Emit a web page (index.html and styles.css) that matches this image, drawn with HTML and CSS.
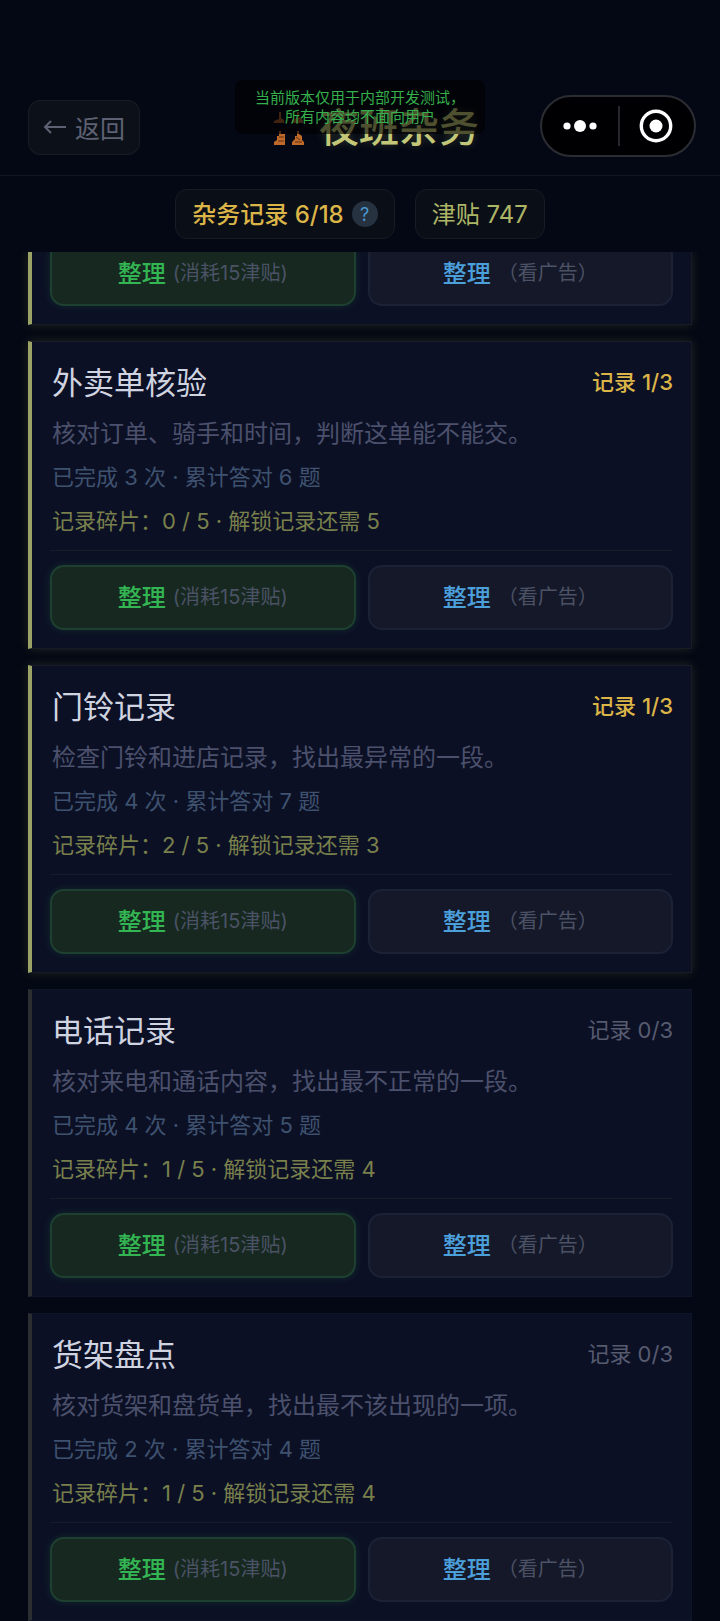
FILE: index.html
```html
<!DOCTYPE html>
<html lang="zh-CN">
<head>
  <meta charset="utf-8">
  <meta name="viewport" content="width=device-width, initial-scale=1">
  <title>夜班杂务</title>
  <link rel="stylesheet" href="styles.css">
</head>
<body>
  <header class="topbar">
    <button class="back" type="button">
      <svg width="24" height="16" viewBox="0 0 24 16" aria-hidden="true"><path d="M8 2 2 8l6 6M2 8h21" fill="none" stroke="currentColor" stroke-width="2"/></svg>
      返回
    </button>
    <h1 class="title">
      <svg class="title-icon" width="32" height="36" viewBox="0 0 32 36" aria-hidden="true">
        <path d="M6 2h2v6l3 2v3H1v-2l5-2zM24 2h2v5l4 3v3H19v-3l5-2z" fill="#a4582c"/>
        <path d="M6 21h2v3h4v11H1v-3l3-2v-4h2zM24 21h2v3l3 2v4l2 2v3H19v-3l3-3v-3h2z" fill="#c06a2a"/>
        <path d="M6 27h5M5 31h6M23 27l4 3M22 32h7" stroke="#5c2f14" stroke-width="1" fill="none"/>
      </svg>
      夜班杂务
    </h1>
    <div class="capsule">
      <button class="capsule-btn" type="button" aria-label="更多">
        <svg width="34" height="14" viewBox="0 0 34 14"><g fill="#fff"><circle cx="4" cy="7" r="3.6"/><circle cx="17" cy="7" r="6"/><circle cx="30" cy="7" r="3.6"/></g></svg>
      </button>
      <button class="capsule-btn" type="button" aria-label="关闭">
        <svg width="34" height="34" viewBox="0 0 34 34"><circle cx="17" cy="17" r="14.7" fill="none" stroke="#fff" stroke-width="3.4"/><circle cx="17" cy="17" r="6.5" fill="#fff"/></svg>
      </button>
    </div>
    <p class="notice">当前版本仅用于内部开发测试，<br>所有内容均不面向用户</p>
  </header>

  <div class="summary">
    <div class="chip chip-gold"><span>杂务记录 6/18</span> <button class="help" type="button">?</button></div>
    <div class="chip chip-lime"><span>津贴 747</span></div>
  </div>

  <main class="list">
    <section class="card card-lit card-cut">
      <div class="actions">
        <button class="act act-pay" type="button">整理 <small>(消耗15津贴)</small></button>
        <button class="act act-ad" type="button">整理 <small>（看广告）</small></button>
      </div>
    </section>

    <section class="card card-lit">
      <div class="card-head">
        <h2>外卖单核验</h2>
        <span class="count">记录 1/3</span>
      </div>
      <p class="desc">核对订单、骑手和时间，判断这单能不能交。</p>
      <p class="stat">已完成 3 次 · 累计答对 6 题</p>
      <p class="shard">记录碎片：0 / 5 · 解锁记录还需 5</p>
      <div class="actions">
        <button class="act act-pay" type="button">整理 <small>(消耗15津贴)</small></button>
        <button class="act act-ad" type="button">整理 <small>（看广告）</small></button>
      </div>
    </section>

    <section class="card card-lit">
      <div class="card-head">
        <h2>门铃记录</h2>
        <span class="count">记录 1/3</span>
      </div>
      <p class="desc">检查门铃和进店记录，找出最异常的一段。</p>
      <p class="stat">已完成 4 次 · 累计答对 7 题</p>
      <p class="shard">记录碎片：2 / 5 · 解锁记录还需 3</p>
      <div class="actions">
        <button class="act act-pay" type="button">整理 <small>(消耗15津贴)</small></button>
        <button class="act act-ad" type="button">整理 <small>（看广告）</small></button>
      </div>
    </section>

    <section class="card">
      <div class="card-head">
        <h2>电话记录</h2>
        <span class="count">记录 0/3</span>
      </div>
      <p class="desc">核对来电和通话内容，找出最不正常的一段。</p>
      <p class="stat">已完成 4 次 · 累计答对 5 题</p>
      <p class="shard">记录碎片：1 / 5 · 解锁记录还需 4</p>
      <div class="actions">
        <button class="act act-pay" type="button">整理 <small>(消耗15津贴)</small></button>
        <button class="act act-ad" type="button">整理 <small>（看广告）</small></button>
      </div>
    </section>

    <section class="card">
      <div class="card-head">
        <h2>货架盘点</h2>
        <span class="count">记录 0/3</span>
      </div>
      <p class="desc">核对货架和盘货单，找出最不该出现的一项。</p>
      <p class="stat">已完成 2 次 · 累计答对 4 题</p>
      <p class="shard">记录碎片：1 / 5 · 解锁记录还需 4</p>
      <div class="actions">
        <button class="act act-pay" type="button">整理 <small>(消耗15津贴)</small></button>
        <button class="act act-ad" type="button">整理 <small>（看广告）</small></button>
      </div>
    </section>
  </main>
</body>
</html>
```

FILE: styles.css
```css
* { box-sizing: border-box; }

body {
  margin: 0;
  background: #030814;
  color: #d5d8e4;
  font-family: Inter, "Noto Sans CJK SC", sans-serif;
  font-size: 22px;
}

h1, h2, p { margin: 0; }
button { font-family: inherit; margin: 0; padding: 0; cursor: pointer; }
svg { display: block; }

/* top bar */
.topbar {
  position: relative;
  display: grid;
  grid-template-columns: 1fr auto 1fr;
  align-items: center;
  padding: 80px 24px 0 28px;
  height: 176px;
  border-bottom: 1px solid #11161f;
}

.back {
  justify-self: start;
  display: flex;
  align-items: center;
  gap: 8px;
  height: 55px;
  padding: 0 14px 2px;
  border: 1px solid #191d24;
  border-radius: 12px;
  background: #0c1119;
  color: #5d6173;
  font-size: 25px;
}

.title {
  display: flex;
  align-items: center;
  gap: 14px;
  padding-left: 28px;
  color: #c3c878;
  font-size: 40px;
  font-weight: 500;
  line-height: 48px;
  text-shadow: 0 0 8px rgba(195, 200, 120, .25);
}

.capsule {
  justify-self: end;
  display: flex;
  width: 156px;
  height: 62px;
  margin-bottom: 4px;
  border: 2px solid #2b2d33;
  border-radius: 31px;
  background: #000003;
}
.capsule-btn {
  flex: 1;
  display: flex;
  align-items: center;
  justify-content: center;
  border: 0;
  background: none;
}
.capsule-btn + .capsule-btn { position: relative; }
.capsule-btn + .capsule-btn::before {
  content: "";
  position: absolute;
  left: 0;
  top: 9px;
  bottom: 9px;
  width: 2px;
  background: #25272d;
}

.notice {
  position: absolute;
  left: 50%;
  top: 80px;
  width: 250px;
  padding: 8px 0;
  transform: translateX(-50%);
  border-radius: 8px;
  background: rgba(0, 0, 0, .6);
  color: #35b04c;
  font-size: 15px;
  line-height: 19px;
  text-align: center;
}

/* totals */
.summary {
  display: flex;
  justify-content: center;
  gap: 20px;
  padding: 13px 0;
}
.chip {
  display: flex;
  align-items: center;
  gap: 8px;
  height: 50px;
  padding: 0 16px;
  border: 1px solid #171b22;
  border-radius: 12px;
  background: #0a0f17;
  font-size: 24px;
}
.chip span { padding-bottom: 4px; }
.chip-gold { color: #dcb548; font-weight: 500; }
.chip-lime { color: #adb566; }
.help {
  width: 26px;
  height: 26px;
  border: 0;
  border-radius: 50%;
  background: #26323f;
  color: #4a96cf;
  font-size: 18px;
}

/* task cards */
.list {
  display: flex;
  flex-direction: column;
  gap: 16px;
  padding: 0 28px;
  overflow: hidden;
}
.card {
  padding: 16px 18px 18px;
  border: 1px solid #101428;
  border-left: 4px solid #2b2e31;
  background: #0c1025;
}
.card-lit {
  border-color: #181b26;
  border-left-color: #9ba366;
  box-shadow: 0 0 10px rgba(160, 165, 90, .2);
}
.card-cut {
  padding-top: 0;
  border-top: 0;
}

.card-head {
  display: flex;
  align-items: center;
  justify-content: space-between;
  height: 44px;
}
.card-head, .desc, .stat, .shard { padding-left: 2px; }
h2 {
  color: #d0d4e0;
  font-size: 31px;
  font-weight: 400;
}
.count { color: #565b70; }
.card-lit .count { color: #dcb548; font-weight: 500; }

.desc {
  margin-top: 14px;
  color: #4b506c;
  font-size: 24px;
  line-height: 36px;
}
.stat, .shard { line-height: 34px; }
.stat {
  margin-top: 8px;
  color: #3e526f;
}
.shard {
  margin-top: 10px;
  color: #79804c;
}

.actions {
  display: flex;
  gap: 12px;
  margin-top: 12px;
  padding-top: 14px;
  border-top: 1px solid #171b2a;
}
.card-cut .actions {
  margin-top: -11px;
  padding-top: 0;
  border-top: 0;
}
.act {
  flex: 1;
  display: flex;
  align-items: center;
  justify-content: center;
  gap: 7px;
  height: 65px;
  padding-bottom: 4px;
  border-radius: 14px;
  font-size: 24px;
  font-weight: 500;
}
.act small {
  color: #4b5265;
  font-size: 20px;
  font-weight: 400;
}
.act-pay {
  border: 2px solid #1d4030;
  background: #16281f;
  color: #34b553;
  box-shadow: 0 0 8px rgba(40, 160, 80, .18);
}
.act-ad {
  border: 2px solid #1b2236;
  background: #151828;
  color: #4b9fda;
}
```
